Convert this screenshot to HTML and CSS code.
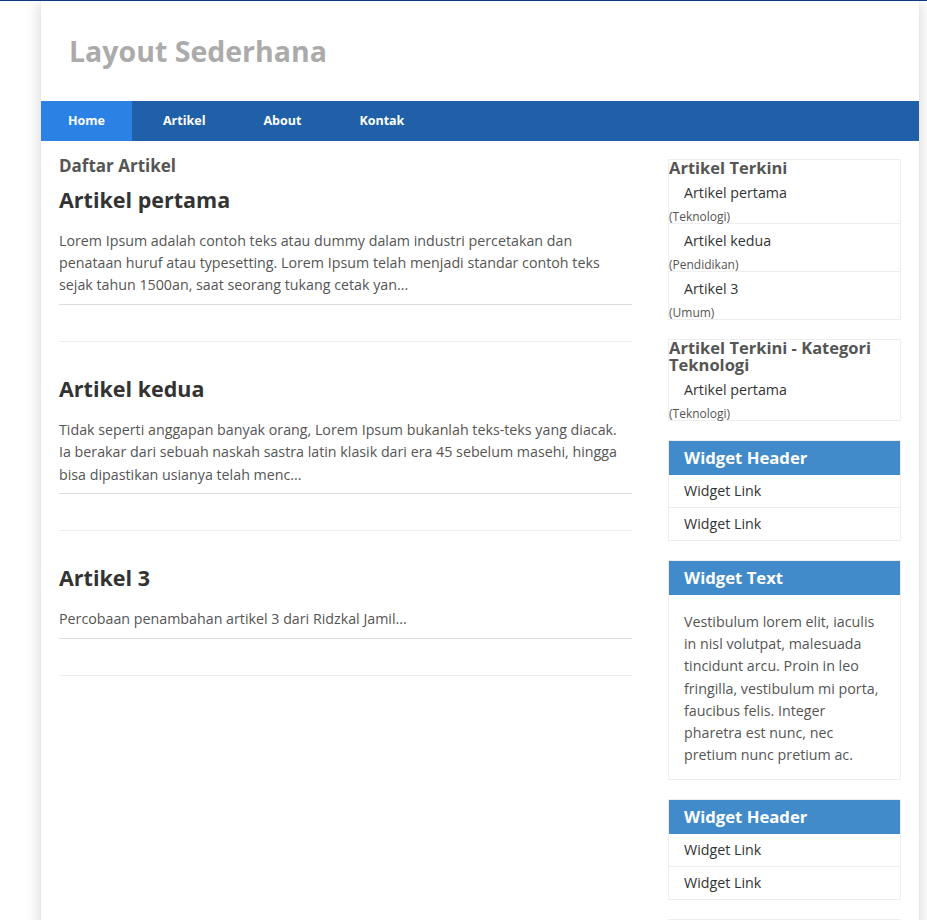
FILE: index.html
```html
<!DOCTYPE html>
<html lang="id">
<head>
<meta charset="utf-8">
<title>Layout Sederhana</title>
<link rel="stylesheet" href="styles.css">
</head>
<body>
<div class="page">
  <header class="site-header">
    <h1 class="site-title">Layout Sederhana</h1>
  </header>
  <nav class="main-nav">
    <a class="nav-link active" href="#">Home</a>
    <a class="nav-link" href="#">Artikel</a>
    <a class="nav-link" href="#">About</a>
    <a class="nav-link" href="#">Kontak</a>
  </nav>
  <div class="content">
    <main class="main">
      <h2 class="section-title">Daftar Artikel</h2>

      <article class="post">
        <h3 class="post-title">Artikel pertama</h3>
        <div class="post-body">
          <p>Lorem Ipsum adalah contoh teks atau dummy dalam industri percetakan dan penataan huruf atau typesetting. Lorem Ipsum telah menjadi standar contoh teks sejak tahun 1500an, saat seorang tukang cetak yan...</p>
        </div>
      </article>
      <hr class="post-sep">

      <article class="post">
        <h3 class="post-title">Artikel kedua</h3>
        <div class="post-body">
          <p>Tidak seperti anggapan banyak orang, Lorem Ipsum bukanlah teks-teks yang diacak. Ia berakar dari sebuah naskah sastra latin klasik dari era 45 sebelum masehi, hingga bisa dipastikan usianya telah menc...</p>
        </div>
      </article>
      <hr class="post-sep">

      <article class="post">
        <h3 class="post-title">Artikel 3</h3>
        <div class="post-body">
          <p>Percobaan penambahan artikel 3 dari Ridzkal Jamil...</p>
        </div>
      </article>
      <hr class="post-sep">
    </main>

    <aside class="sidebar">
      <section class="widget">
        <h3 class="widget-plain-title">Artikel Terkini</h3>
        <ul class="post-list">
          <li><a href="#">Artikel pertama</a><small>(Teknologi)</small></li>
          <li><a href="#">Artikel kedua</a><small>(Pendidikan)</small></li>
          <li><a href="#">Artikel 3</a><small>(Umum)</small></li>
        </ul>
      </section>

      <section class="widget">
        <h3 class="widget-plain-title">Artikel Terkini - Kategori Teknologi</h3>
        <ul class="post-list">
          <li><a href="#">Artikel pertama</a><small>(Teknologi)</small></li>
        </ul>
      </section>

      <section class="widget">
        <h3 class="widget-header">Widget Header</h3>
        <ul class="link-list">
          <li><a href="#">Widget Link</a></li>
          <li><a href="#">Widget Link</a></li>
        </ul>
      </section>

      <section class="widget">
        <h3 class="widget-header">Widget Text</h3>
        <div class="widget-text">Vestibulum lorem elit, iaculis in nisl volutpat, malesuada tincidunt arcu. Proin in leo fringilla, vestibulum mi porta, faucibus felis. Integer pharetra est nunc, nec pretium nunc pretium ac.</div>
      </section>

      <section class="widget">
        <h3 class="widget-header">Widget Header</h3>
        <ul class="link-list">
          <li><a href="#">Widget Link</a></li>
          <li><a href="#">Widget Link</a></li>
        </ul>
      </section>

      <section class="widget">
        <h3 class="widget-header">Widget Text</h3>
        <div class="widget-text">Vestibulum lorem elit, iaculis in nisl volutpat, malesuada tincidunt arcu.</div>
      </section>
    </aside>
  </div>
</div>
</body>
</html>
```
FILE: styles.css
```css
html, body {
  margin: 0;
  padding: 0;
}

body {
  font-family: "Open Sans", "DejaVu Sans", sans-serif;
  background: #fff;
  border-top: 1px solid #0f3b7e;
  color: #555;
}

.page {
  width: 878px;
  margin-left: 41px;
  background: #fff;
  box-shadow: 0 0 16px rgba(0, 0, 0, 0.18);
  padding-bottom: 40px;
}

/* Header */
.site-header {
  height: 100px;
  display: flex;
  align-items: center;
  padding-left: 28px;
}

.site-title {
  margin: 0;
  font-size: 28.5px;
  line-height: 41px;
  font-weight: 700;
  color: #ababab;
}

/* Navigation */
.main-nav {
  display: flex;
  gap: 4px;
  height: 40px;
  background: #2060a9;
}

.nav-link {
  padding: 0 27px;
  line-height: 40px;
  font-size: 12.5px;
  font-weight: 700;
  color: #fff;
  text-decoration: none;
}

.nav-link.active {
  background: #2b82e4;
}

/* Content layout */
.content {
  display: flex;
  align-items: flex-start;
  gap: 36px;
  padding: 14px 18px 0;
}

.main {
  width: 573px;
  flex: none;
}

.sidebar {
  width: 233px;
  flex: none;
  margin-top: 3.5px;
}

/* Main column */
.section-title {
  margin: 0 0 8px;
  font-size: 17px;
  line-height: 22px;
  font-weight: 700;
  color: #555;
}

.post-title {
  margin: 0 0 14.5px;
  font-size: 21.5px;
  line-height: 30px;
  font-weight: 700;
  color: #333;
}

.post-body {
  padding-bottom: 7.5px;
  border-bottom: 1px solid #ddd;
}

.post-body p {
  margin: 0;
  font-size: 14.25px;
  line-height: 22.4px;
  color: #555;
}

.post-sep {
  margin: 36px 0 32px;
  border: 0;
  border-top: 1px solid #eee;
  height: 0;
}

/* Sidebar widgets */
.widget {
  border: 1px solid #eee;
  margin-bottom: 19px;
}

.widget-plain-title {
  margin: 0;
  font-size: 16.5px;
  line-height: 16.5px;
  font-weight: 700;
  color: #555;
}

.post-list,
.link-list {
  list-style: none;
  margin: 0;
  padding: 0;
}

.post-list li {
  border-bottom: 1px solid #eee;
  height: 47px;
}

.post-list li:last-child,
.link-list li:last-child {
  border-bottom: 0;
}

.post-list a {
  display: block;
  padding: 6px 15px 0;
  font-size: 14.25px;
  line-height: 22px;
  color: #333;
  text-decoration: none;
}

.post-list small {
  display: block;
  margin-top: 7px;
  font-size: 12px;
  line-height: 12px;
  color: #555;
}

.widget-header {
  margin: 0;
  height: 34px;
  padding: 0 15px;
  background: #428bca;
  color: #fff;
  font-size: 16.7px;
  line-height: 34px;
  font-weight: 700;
}

.link-list li {
  border-bottom: 1px solid #eee;
}

.link-list a {
  display: block;
  padding: 5px 15px;
  font-size: 14.25px;
  line-height: 22px;
  color: #333;
  text-decoration: none;
}

.widget-text {
  padding: 16px 15px 13px;
  font-size: 14.25px;
  line-height: 22.2px;
  color: #555;
}
```
